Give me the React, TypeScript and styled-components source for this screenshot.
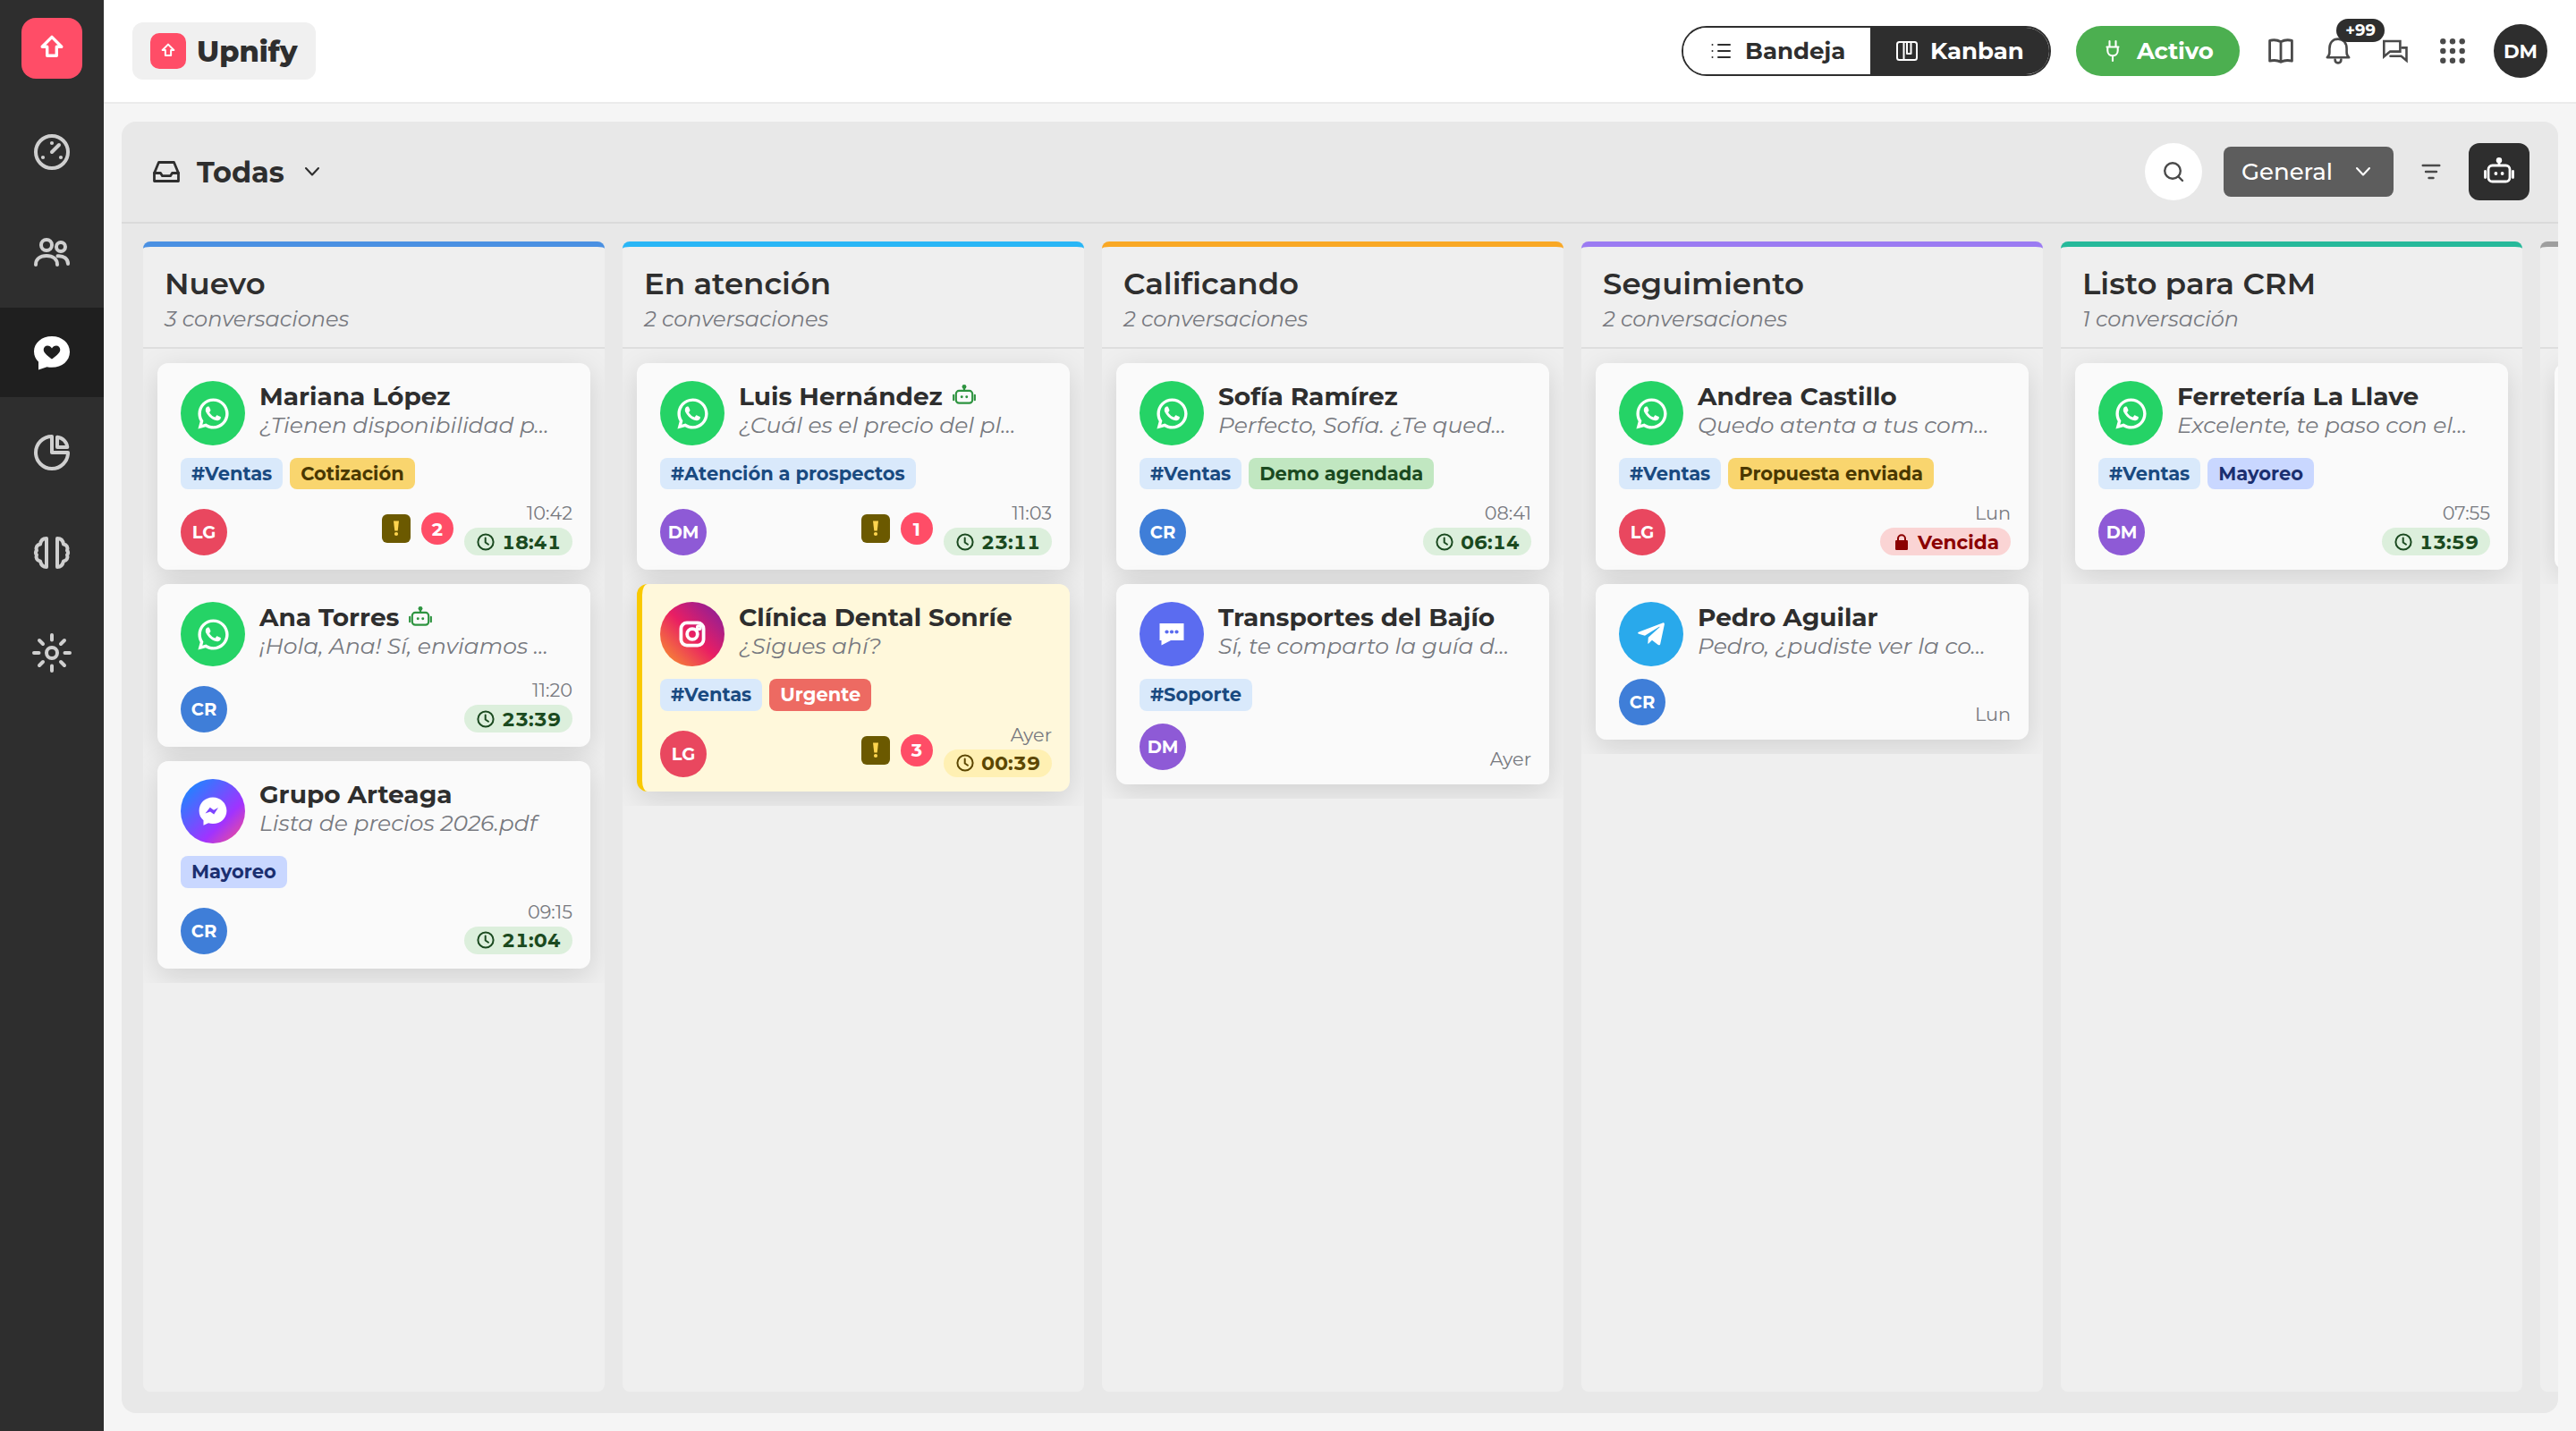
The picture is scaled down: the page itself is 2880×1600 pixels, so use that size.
import React from 'react';
import styled, { createGlobalStyle } from 'styled-components';
import { RiWhatsappLine } from 'react-icons/ri';
import { FaTelegramPlane } from 'react-icons/fa';

const Global = createGlobalStyle`
  *, *::before, *::after { box-sizing: border-box; }
  body { margin: 0; background: #f5f5f5; color: #2e2e2e; font-family: Montserrat, Inter, sans-serif; font-size: 26px; }
  svg { display: block; flex: none; }
`;

/* ---------- Shell ---------- */

const Shell = styled.div`
  display: flex;
  width: 2880px;
  height: 1600px;
  overflow: hidden;
`;

const Sidebar = styled.nav`
  display: flex;
  flex-direction: column;
  align-items: center;
  gap: 12px;
  flex: none;
  width: 116px;
  background: #2e2e2e;
`;

const LogoTile = styled.div<{ $size: number }>`
  display: grid;
  place-items: center;
  flex: none;
  width: ${(p) => p.$size}px;
  height: ${(p) => p.$size}px;
  border-radius: ${(p) => (p.$size > 50 ? 16 : 10)}px;
  background: #ff4d67;
  color: #fff;
`;

const SidebarLogo = styled.div`
  padding: 20px 0;
`;

const SideItem = styled.div<{ $active?: boolean }>`
  display: grid;
  place-items: center;
  width: 100%;
  height: 100px;
  background: ${(p) => (p.$active ? '#1f1f1f' : 'transparent')};
  color: ${(p) => (p.$active ? '#fff' : '#cfcfcf')};
`;

const Main = styled.div`
  display: flex;
  flex-direction: column;
  flex: 1;
  min-width: 0;
`;

/* ---------- Top bar ---------- */

const TopBar = styled.header`
  display: flex;
  align-items: center;
  justify-content: space-between;
  flex: none;
  height: 116px;
  padding: 0 32px;
  background: #fff;
  border-bottom: 2px solid #ebebeb;
`;

const Brand = styled.div`
  display: flex;
  align-items: center;
  gap: 12px;
  height: 64px;
  padding: 0 20px;
  border-radius: 12px;
  background: #f0f0f0;
  font-size: 32px;
  font-weight: 800;
`;

const TopActions = styled.div`
  display: flex;
  align-items: center;
`;

const Segmented = styled.div`
  display: flex;
  height: 56px;
  width: 413px;
  border: 2px solid #2e2e2e;
  border-radius: 28px;
  overflow: hidden;
  margin-right: 28px;
`;

const Segment = styled.div<{ $active?: boolean }>`
  display: flex;
  align-items: center;
  flex: none;
  gap: ${(p) => (p.$active ? 14 : 16)}px;
  width: ${(p) => (p.$active ? 200 : 209)}px;
  padding-left: ${(p) => (p.$active ? 29 : 31)}px;
  font-weight: 700;
  background: ${(p) => (p.$active ? '#2e2e2e' : '#fff')};
  color: ${(p) => (p.$active ? '#fff' : '#2e2e2e')};
`;

const StatusPill = styled.div`
  display: flex;
  align-items: center;
  gap: 19px;
  width: 183px;
  height: 56px;
  padding-left: 33px;
  margin-right: 14px;
  border-radius: 28px;
  background: #4caf50;
  color: #fff;
  font-weight: 700;
  letter-spacing: -0.2px;
`;

const IconSlot = styled.div`
  position: relative;
  display: grid;
  place-items: center;
  width: 64px;
  height: 64px;
  color: #4a4a4a;
`;

const CountBubble = styled.span`
  position: absolute;
  left: 30px;
  top: -4px;
  width: 54px;
  height: 26px;
  border-radius: 13px;
  background: #2e2e2e;
  color: #fff;
  font-size: 18px;
  font-weight: 700;
  line-height: 26px;
  text-align: center;
`;

const Avatar = styled.div<{ $size: number; $color: string }>`
  display: grid;
  place-items: center;
  flex: none;
  width: ${(p) => p.$size}px;
  height: ${(p) => p.$size}px;
  border-radius: 50%;
  background: ${(p) => p.$color};
  color: #fff;
  font-size: ${(p) => (p.$size > 55 ? 21.4 : 19.5)}px;
  font-weight: 700;
`;

const UserSlot = styled.div`
  margin-left: 14px;
`;

/* ---------- Board panel ---------- */

const Panel = styled.section`
  display: flex;
  flex-direction: column;
  flex: 1;
  min-height: 0;
  margin: 20px;
  border-radius: 16px;
  background: #e8e8e8;
  overflow: hidden;
`;

const PanelHeader = styled.div`
  display: flex;
  align-items: center;
  justify-content: space-between;
  flex: none;
  height: 114px;
  padding: 0 32px 0 35px;
  border-bottom: 2px solid #dadada;
`;

const InboxPicker = styled.div`
  display: flex;
  align-items: center;
  font-size: 32px;
  font-weight: 700;
`;

const InboxName = styled.span`
  margin: 0 22px 0 19px;
`;

const PanelTools = styled.div`
  display: flex;
  align-items: center;
`;

const SearchButton = styled.div`
  display: grid;
  place-items: center;
  width: 64px;
  height: 64px;
  margin-right: 24px;
  border-radius: 50%;
  background: #fff;
  color: #4a4a4a;
`;

const SelectBox = styled.div`
  display: flex;
  align-items: center;
  justify-content: space-between;
  width: 190px;
  height: 56px;
  padding: 0 25px 0 20px;
  border-radius: 8px;
  background: #5d5d5d;
  color: #fff;
  font-weight: 500;
`;

const FilterButton = styled.div`
  display: grid;
  place-items: center;
  width: 84px;
  color: #4a4a4a;
`;

const BotButton = styled.div`
  display: grid;
  place-items: center;
  width: 68px;
  height: 64px;
  padding-bottom: 4px;
  border-radius: 12px;
  background: #2e2e2e;
  color: #fff;
`;

const Board = styled.div`
  display: flex;
  gap: 20px;
  flex: 1;
  min-height: 0;
  padding: 20px 0 24px 24px;
  overflow: hidden;
`;

const ColumnBox = styled.div<{ $accent: string }>`
  display: flex;
  flex-direction: column;
  flex: none;
  width: 516px;
  border-top: 6px solid ${(p) => p.$accent};
  border-radius: 8px;
  background: #efefef;
`;

const ColumnHeader = styled.div`
  flex: none;
  height: 114px;
  padding: 20px 24px 0;
  border-bottom: 2px solid #dedede;
`;

const ColumnTitle = styled.h2`
  margin: 0;
  height: 42px;
  font-size: 34px;
  font-weight: 600;
  line-height: 42px;
  white-space: nowrap;
`;

const ColumnCount = styled.p`
  margin: 4px 0 0;
  height: 30px;
  font-size: 24px;
  font-style: italic;
  line-height: 30px;
  color: #77797f;
  white-space: nowrap;
`;

const CardList = styled.div`
  display: flex;
  flex-direction: column;
  gap: 16px;
  padding: 16px;
  overflow: hidden;
`;

/* ---------- Card ---------- */

const CardBox = styled.article<{ $flag?: boolean }>`
  display: flex;
  flex-direction: column;
  gap: 14px;
  padding: 20px 20px 16px;
  border-left: 6px solid ${(p) => (p.$flag ? '#f9c900' : '#fafafa')};
  border-radius: 12px;
  background: ${(p) => (p.$flag ? '#fff8db' : '#fafafa')};
  box-shadow: 0 8px 32px rgba(0, 0, 0, 0.13);
`;

const CardHead = styled.div`
  display: flex;
  gap: 16px;
  height: 72px;
`;

const ChannelDisc = styled.div<{ $bg: string }>`
  display: grid;
  place-items: center;
  flex: none;
  width: 72px;
  height: 72px;
  border-radius: 50%;
  background: ${(p) => p.$bg};
  color: #fff;
`;

const CardText = styled.div`
  min-width: 0;
  white-space: nowrap;
`;

const NameLine = styled.div`
  display: flex;
  align-items: center;
  gap: 11px;
  height: 34px;
  font-size: 28px;
  font-weight: 700;
`;

const BotMark = styled.span`
  color: #2e9440;
  margin-bottom: 3px;
`;

const Message = styled.div`
  height: 31px;
  font-size: 25px;
  font-style: italic;
  line-height: 31px;
  color: #77797f;
`;

const TagRow = styled.div`
  display: flex;
  gap: 8px;
  height: 35.4px;
`;

const TagChip = styled.span<{ $bg: string; $fg: string }>`
  padding: 0 12px;
  border-radius: 8px;
  background: ${(p) => p.$bg};
  color: ${(p) => p.$fg};
  font-size: 21px;
  font-weight: 700;
  line-height: 35px;
  white-space: nowrap;
`;

const CardFoot = styled.div`
  display: flex;
  align-items: flex-end;
  justify-content: space-between;
`;

const FootMeta = styled.div`
  display: flex;
  align-items: center;
  gap: 12px;
`;

const AlertMark = styled.span`
  display: grid;
  place-items: center;
  width: 32px;
  height: 32px;
  border-radius: 6px;
  background: #6b5900;
  color: #ffd54f;
`;

const Unread = styled.span`
  display: grid;
  place-items: center;
  width: 36px;
  height: 36px;
  border-radius: 50%;
  background: #ff4d67;
  color: #fff;
  font-size: 20.8px;
  font-weight: 700;
`;

const TimeStack = styled.div`
  display: flex;
  flex-direction: column;
  align-items: flex-end;
  gap: 4px;
`;

const TimeText = styled.span`
  height: 25px;
  font-size: 20.8px;
  line-height: 25px;
  color: #77797f;
`;

const pillTones = {
  ok: ['#dcefdc', '#1b4a20'],
  warn: ['#fff0b3', '#5c4700'],
  late: ['#fad4d4', '#8b0000'],
} as const;

const WindowPill = styled.span<{ $tone: keyof typeof pillTones }>`
  display: flex;
  align-items: center;
  gap: 8px;
  height: 31px;
  padding: 0 13px 0 14px;
  border-radius: 16px;
  background: ${(p) => pillTones[p.$tone][0]};
  color: ${(p) => pillTones[p.$tone][1]};
  font-size: 21.6px;
  font-weight: 700;
  font-variant-numeric: tabular-nums;
`;

/* ---------- Icons ---------- */

type Stroke = { w: number; h: number; sw?: number; children: React.ReactNode };

const Line = ({ w, h, sw = 2, children }: Stroke) => (
  <svg width={w} height={h} viewBox={`0 0 ${w} ${h}`} fill="none" stroke="currentColor" strokeWidth={sw} strokeLinecap="round" strokeLinejoin="round">
    {children}
  </svg>
);

const UpArrow = ({ size }: { size: number }) => (
  <svg width={size} height={size} viewBox="0 0 68 68" fill="none" stroke="currentColor" strokeWidth={3.4} strokeLinejoin="round">
    <path d="M34 21.4 44.8 32.2H39.3V42.3H28.7V32.2H23.2Z" />
  </svg>
);

const GaugeIcon = () => (
  <Line w={44} h={44} sw={4}>
    <circle cx="22" cy="22" r="18" />
    <path d="M22 22 30 14" />
    <g fill="currentColor" stroke="none">
      <circle cx="22" cy="12" r="2.1" />
      <circle cx="12" cy="28" r="2.1" />
      <circle cx="32" cy="28" r="2.1" />
    </g>
  </Line>
);

const PeopleIcon = () => (
  <Line w={44} h={44} sw={4}>
    <circle cx="16" cy="14" r="6" />
    <circle cx="32" cy="16" r="5" />
    <path d="M4 36C4 29.5 9 26 16 26S28 29.5 28 36" />
    <path d="M28.5 26.2C35.5 25.6 40 29.5 40 35" />
  </Line>
);

const HeartChatIcon = () => (
  <svg width="44" height="44" viewBox="0 0 44 44">
    <path fill="#fff" d="M22 4C10.6 4 2 11.4 2 21c0 5 2 8.8 5 11.600L7 41.600 16.500 38.200C18.300 38.600 20 38.800 22 38.800c11.400 0 20-7.500 20-17.400S33.400 4 22 4Z" />
    <path fill="#1f1f1f" d="M22 29.400C18.500 26.800 12.700 22.800 12.700 18.900c0-2.600 2-4.500 4.400-4.500 2 0 3.800 1.100 4.900 3 1.100-1.900 2.900-3 4.900-3 2.400 0 4.400 1.900 4.400 4.500 0 3.900-5.800 7.900-9.300 10.500Z" />
  </svg>
);

const PieIcon = () => (
  <Line w={44} h={44} sw={4}>
    <path d="M22 4A18 18 0 1 0 40 22H22Z" />
    <path d="M28 4.7V16H39.3A12.5 12.5 0 0 0 28 4.7Z" />
  </Line>
);

const BrainIcon = () => (
  <Line w={44} h={44} sw={4}>
    <path d="M16 6V38C12 38 10 36 9 31.500 5.500 31 3.600 27.500 5 24.500 3.500 23 3.500 21 5 19.500 3.600 16 5.500 13 9 12.500 9.500 8.500 12 6 16 6Z" />
    <path d="M28 6V38C32 38 34 36 35 31.500 38.500 31 40.400 27.500 39 24.500 40.500 23 40.500 21 39 19.500 40.400 16 38.500 13 35 12.500 34.500 8.500 32 6 28 6Z" />
  </Line>
);

const SunIcon = () => (
  <Line w={44} h={44} sw={4}>
    <circle cx="22" cy="22" r="6" />
    <path d="M22 2V7.5M22 36.5V42M2 22H7.5M36.5 22H42M8 8 12 12M32 32 36 36M36 8 32 12M12 32 8 36" />
  </Line>
);

const ListIcon = () => (
  <Line w={22} h={20} sw={2}>
    <path d="M8 3H21M8 10H21M8 17H21" />
    <path d="M1.5 3V3M1.5 10V10M1.5 17V17" />
  </Line>
);

const KanbanIcon = () => (
  <Line w={24} h={24} sw={2}>
    <rect x="1" y="2" width="22" height="20" rx="2.5" />
    <path d="M8.5 2V22M12 2V15H16.500V2" />
  </Line>
);

const PlugIcon = () => (
  <Line w={16} h={26} sw={2.1}>
    <path d="M4.500 2V8M11.500 2V8M1.500 8.500H14.500M2.300 8.500V12.500C2.300 16 4.800 18.300 8 18.300S13.700 16 13.700 12.500V8.500M8 18.500V24" />
  </Line>
);

const BookIcon = () => (
  <Line w={30} h={30} sw={2.8}>
    <path d="M15 4.800C11.500 2.800 6.500 2.400 2.600 3.400V26.200C6.500 25.200 11.500 25.400 15 27.400 18.500 25.400 23.500 25.200 27.400 26.200V3.400C23.500 2.400 18.500 2.800 15 4.800ZM15 4.800V27" />
  </Line>
);

const BellIcon = () => (
  <Line w={30} h={34} sw={2.6}>
    <path d="M2.800 24.200H27.200C25.200 22.600 24.600 21 24.600 18.500V14.500C24.600 8 21 3.600 15 3.600S5.400 8 5.400 14.500V18.500C5.400 21 4.800 22.600 2.800 24.200Z" />
    <path d="M11.600 26.500C11.600 31.600 18.400 31.600 18.400 26.500" />
  </Line>
);

const ChatsIcon = () => (
  <Line w={30} h={30} sw={2.6}>
    <path d="M2.300 4H20.400V15.600H9.200L2.300 21.200Z" strokeLinejoin="miter" />
    <path d="M22.500 11.400H27.500V25.800L21.600 20.800H9.500" strokeLinejoin="miter" />
  </Line>
);

const dotSteps = [3.3, 14, 24.7];

const GridIcon = () => (
  <svg width="28" height="28" viewBox="0 0 28 28" fill="currentColor">
    {dotSteps.map((y) => dotSteps.map((x) => <circle key={`${x}-${y}`} cx={x} cy={y} r="3.2" />))}
  </svg>
);

const InboxIcon = () => (
  <Line w={30} h={24} sw={2.8}>
    <path d="M6.500 1.500H23.500L28.500 13.500V22.500H1.500V13.500Z" />
    <path d="M1.500 13.500H8.500L10.500 16.700H19.500L21.500 13.500H28.500" />
  </Line>
);

const ChevronIcon = () => (
  <Line w={18} h={12} sw={2.1}>
    <path d="M2 2 9 9.500 16 2" />
  </Line>
);

const SearchIcon = () => (
  <Line w={24} h={24} sw={2.4}>
    <circle cx="11" cy="11" r="8.8" />
    <path d="M17.500 17.500 22 22" />
  </Line>
);

const FilterIcon = () => (
  <Line w={22} h={18} sw={2.4}>
    <path d="M1.700 2H20.300M5 9H17M8.500 16H13.500" />
  </Line>
);

const BotIcon = ({ width = 34 }: { width?: number }) => (
  <svg width={width} height={(width * 29) / 34} viewBox="0 0 34 29" fill="none" stroke="currentColor" strokeWidth="2.8">
    <circle cx="17" cy="3.3" r="3.2" fill="currentColor" stroke="none" />
    <path d="M17 4V9" />
    <rect x="5" y="9" width="24" height="18" rx="4.5" />
    <path d="M1.500 15.500V22.500M32.500 15.500V22.500" strokeLinecap="round" />
    <circle cx="13.4" cy="18" r="1.9" fill="currentColor" stroke="none" />
    <circle cx="20.6" cy="18" r="1.9" fill="currentColor" stroke="none" />
  </svg>
);

const ClockIcon = () => (
  <Line w={20} h={20} sw={2}>
    <circle cx="10" cy="10" r="8.6" />
    <path d="M9.700 5.500V10.500L13 12.800" />
  </Line>
);

const LockIcon = () => (
  <svg width="20" height="20" viewBox="0 0 20 20">
    <path d="M6 9V6.200A4 4 0 0 1 14 6.200V9" fill="none" stroke="currentColor" strokeWidth="2" />
    <rect x="3" y="8" width="14" height="11" rx="1.2" fill="currentColor" />
  </svg>
);

const ExclaimIcon = () => (
  <svg width="8" height="18" viewBox="0 0 8 18" fill="currentColor">
    <path d="M1 0.500H7L5.700 11.500H2.300Z" />
    <circle cx="4" cy="15" r="2.1" />
  </svg>
);

const MessengerIcon = () => (
  <svg width="32" height="32" viewBox="0 0 32 32">
    <path fill="#fff" d="M16 0.500C7.200 0.500 0.600 7 0.600 15.600c0 4.600 1.800 8.200 4.900 10.700V31.800L11 29.300c1.600.5 3.300.8 5 .8 8.800 0 15.400-6.300 15.400-14.600S24.800.5 16 .5Z" />
    <path fill="#7d45ff" d="M7.500 18.600 12.800 11.800 17 14.800 22 12 17.200 19.600 13 16.600Z" />
  </svg>
);

const InstagramIcon = () => (
  <Line w={30} h={30} sw={3.8}>
    <rect x="2.4" y="2.4" width="25.2" height="25.2" rx="6.5" />
    <circle cx="15" cy="15" r="5.8" />
    <circle cx="22.3" cy="7.7" r="1.5" />
  </Line>
);

const WebChatIcon = () => (
  <svg width="28" height="26" viewBox="0 0 28 26">
    <path fill="#fff" d="M0.500 1H27.500V20H13L2.500 25.500V20H0.500Z" />
    <g fill="#5b6cf0">
      <circle cx="8.5" cy="10.5" r="2.1" />
      <circle cx="14" cy="10.5" r="2.1" />
      <circle cx="19.5" cy="10.5" r="2.1" />
    </g>
  </svg>
);

/* ---------- Data ---------- */

const channels = {
  whatsapp: { bg: '#25d366', icon: <RiWhatsappLine size={41} /> },
  messenger: { bg: 'linear-gradient(135deg, #0695ff 0%, #a033ff 66%, #ff5280 100%)', icon: <MessengerIcon /> },
  instagram: { bg: 'linear-gradient(45deg, #fa9d2b 0%, #e91e63 50%, #7b1fa2 100%)', icon: <InstagramIcon /> },
  webchat: { bg: '#5b6cf0', icon: <WebChatIcon /> },
  telegram: { bg: '#29a9eb', icon: <FaTelegramPlane size={34} /> },
};

const agents = {
  LG: '#e9475f',
  CR: '#3f7ed8',
  DM: '#8e5ad6',
};

const tagTones: Record<string, [string, string]> = {
  'Cotización': ['#f9d56e', '#4a3800'],
  'Propuesta enviada': ['#f9d56e', '#4a3800'],
  'Mayoreo': ['#c9d7ff', '#1b2f70'],
  'Demo agendada': ['#c1e7c1', '#1b4a20'],
  'Urgente': ['#ed6a62', '#ffffff'],
};

type Card = {
  channel: keyof typeof channels;
  name: string;
  bot?: boolean;
  message: string;
  tags?: string[];
  agent: keyof typeof agents;
  unread?: number;
  time: string;
  pill?: [keyof typeof pillTones, string];
  flag?: boolean;
};

type Column = { title: string; count: string; accent: string; cards: Card[] };

const columns: Column[] = [
  {
    title: 'Nuevo', count: '3 conversaciones', accent: '#4a90e2',
    cards: [
      { channel: 'whatsapp', name: 'Mariana López', message: '¿Tienen disponibilidad p…', tags: ['#Ventas', 'Cotización'], agent: 'LG', unread: 2, time: '10:42', pill: ['ok', '18:41'] },
      { channel: 'whatsapp', name: 'Ana Torres', bot: true, message: '¡Hola, Ana! Sí, enviamos …', agent: 'CR', time: '11:20', pill: ['ok', '23:39'] },
      { channel: 'messenger', name: 'Grupo Arteaga', message: 'Lista de precios 2026.pdf', tags: ['Mayoreo'], agent: 'CR', time: '09:15', pill: ['ok', '21:04'] },
    ],
  },
  {
    title: 'En atención', count: '2 conversaciones', accent: '#29b6f6',
    cards: [
      { channel: 'whatsapp', name: 'Luis Hernández', bot: true, message: '¿Cuál es el precio del pl…', tags: ['#Atención a prospectos'], agent: 'DM', unread: 1, time: '11:03', pill: ['ok', '23:11'] },
      { channel: 'instagram', name: 'Clínica Dental Sonríe', message: '¿Sigues ahí?', tags: ['#Ventas', 'Urgente'], agent: 'LG', unread: 3, time: 'Ayer', pill: ['warn', '00:39'], flag: true },
    ],
  },
  {
    title: 'Calificando', count: '2 conversaciones', accent: '#f9a825',
    cards: [
      { channel: 'whatsapp', name: 'Sofía Ramírez', message: 'Perfecto, Sofía. ¿Te qued…', tags: ['#Ventas', 'Demo agendada'], agent: 'CR', time: '08:41', pill: ['ok', '06:14'] },
      { channel: 'webchat', name: 'Transportes del Bajío', message: 'Sí, te comparto la guía d…', tags: ['#Soporte'], agent: 'DM', time: 'Ayer' },
    ],
  },
  {
    title: 'Seguimiento', count: '2 conversaciones', accent: '#9b7bf2',
    cards: [
      { channel: 'whatsapp', name: 'Andrea Castillo', message: 'Quedo atenta a tus com…', tags: ['#Ventas', 'Propuesta enviada'], agent: 'LG', time: 'Lun', pill: ['late', 'Vencida'] },
      { channel: 'telegram', name: 'Pedro Aguilar', message: 'Pedro, ¿pudiste ver la co…', agent: 'CR', time: 'Lun' },
    ],
  },
  {
    title: 'Listo para CRM', count: '1 conversación', accent: '#26b99a',
    cards: [
      { channel: 'whatsapp', name: 'Ferretería La Llave', message: 'Excelente, te paso con el…', tags: ['#Ventas', 'Mayoreo'], agent: 'DM', time: '07:55', pill: ['ok', '13:59'] },
    ],
  },
];

const EmptyCard = styled(CardBox)`
  height: 231px;
`;

const ConversationCard = ({ card }: { card: Card }) => {
  const channel = channels[card.channel];
  return (
    <CardBox $flag={card.flag}>
      <CardHead>
        <ChannelDisc $bg={channel.bg}>{channel.icon}</ChannelDisc>
        <CardText>
          <NameLine>
            {card.name}
            {card.bot && <BotMark><BotIcon width={26} /></BotMark>}
          </NameLine>
          <Message>{card.message}</Message>
        </CardText>
      </CardHead>
      {card.tags && (
        <TagRow>
          {card.tags.map((tag) => {
            const [bg, fg] = tagTones[tag] ?? ['#d9e9fb', '#1a4a80'];
            return <TagChip key={tag} $bg={bg} $fg={fg}>{tag}</TagChip>;
          })}
        </TagRow>
      )}
      <CardFoot>
        <Avatar $size={52} $color={agents[card.agent]}>{card.agent}</Avatar>
        <FootMeta>
          {card.unread && (
            <>
              <AlertMark><ExclaimIcon /></AlertMark>
              <Unread>{card.unread}</Unread>
            </>
          )}
          <TimeStack>
            <TimeText>{card.time}</TimeText>
            {card.pill && (
              <WindowPill $tone={card.pill[0]}>
                {card.pill[0] === 'late' ? <LockIcon /> : <ClockIcon />}
                {card.pill[1]}
              </WindowPill>
            )}
          </TimeStack>
        </FootMeta>
      </CardFoot>
    </CardBox>
  );
};

export default function App() {
  return (
    <Shell>
      <Global />
      <Sidebar>
        <SidebarLogo>
          <LogoTile $size={68}><UpArrow size={68} /></LogoTile>
        </SidebarLogo>
        <SideItem><GaugeIcon /></SideItem>
        <SideItem><PeopleIcon /></SideItem>
        <SideItem $active><HeartChatIcon /></SideItem>
        <SideItem><PieIcon /></SideItem>
        <SideItem><BrainIcon /></SideItem>
        <SideItem><SunIcon /></SideItem>
      </Sidebar>
      <Main>
        <TopBar>
          <Brand>
            <LogoTile $size={40}><UpArrow size={40} /></LogoTile>
            Upnify
          </Brand>
          <TopActions>
            <Segmented>
              <Segment><ListIcon />Bandeja</Segment>
              <Segment $active><KanbanIcon />Kanban</Segment>
            </Segmented>
            <StatusPill><PlugIcon />Activo</StatusPill>
            <IconSlot><BookIcon /></IconSlot>
            <IconSlot><BellIcon /><CountBubble>+99</CountBubble></IconSlot>
            <IconSlot><ChatsIcon /></IconSlot>
            <IconSlot><GridIcon /></IconSlot>
            <UserSlot><Avatar $size={60} $color="#2e2e2e">DM</Avatar></UserSlot>
          </TopActions>
        </TopBar>
        <Panel>
          <PanelHeader>
            <InboxPicker><InboxIcon /><InboxName>Todas</InboxName><ChevronIcon /></InboxPicker>
            <PanelTools>
              <SearchButton><SearchIcon /></SearchButton>
              <SelectBox>General<ChevronIcon /></SelectBox>
              <FilterButton><FilterIcon /></FilterButton>
              <BotButton><BotIcon /></BotButton>
            </PanelTools>
          </PanelHeader>
          <Board>
            {columns.map((column) => (
              <ColumnBox key={column.title} $accent={column.accent}>
                <ColumnHeader>
                  <ColumnTitle>{column.title}</ColumnTitle>
                  <ColumnCount>{column.count}</ColumnCount>
                </ColumnHeader>
                <CardList>
                  {column.cards.map((card) => <ConversationCard key={card.name} card={card} />)}
                </CardList>
              </ColumnBox>
            ))}
            <ColumnBox $accent="#9e9e9e">
              <ColumnHeader />
              <CardList><EmptyCard /></CardList>
            </ColumnBox>
          </Board>
        </Panel>
      </Main>
    </Shell>
  );
}
